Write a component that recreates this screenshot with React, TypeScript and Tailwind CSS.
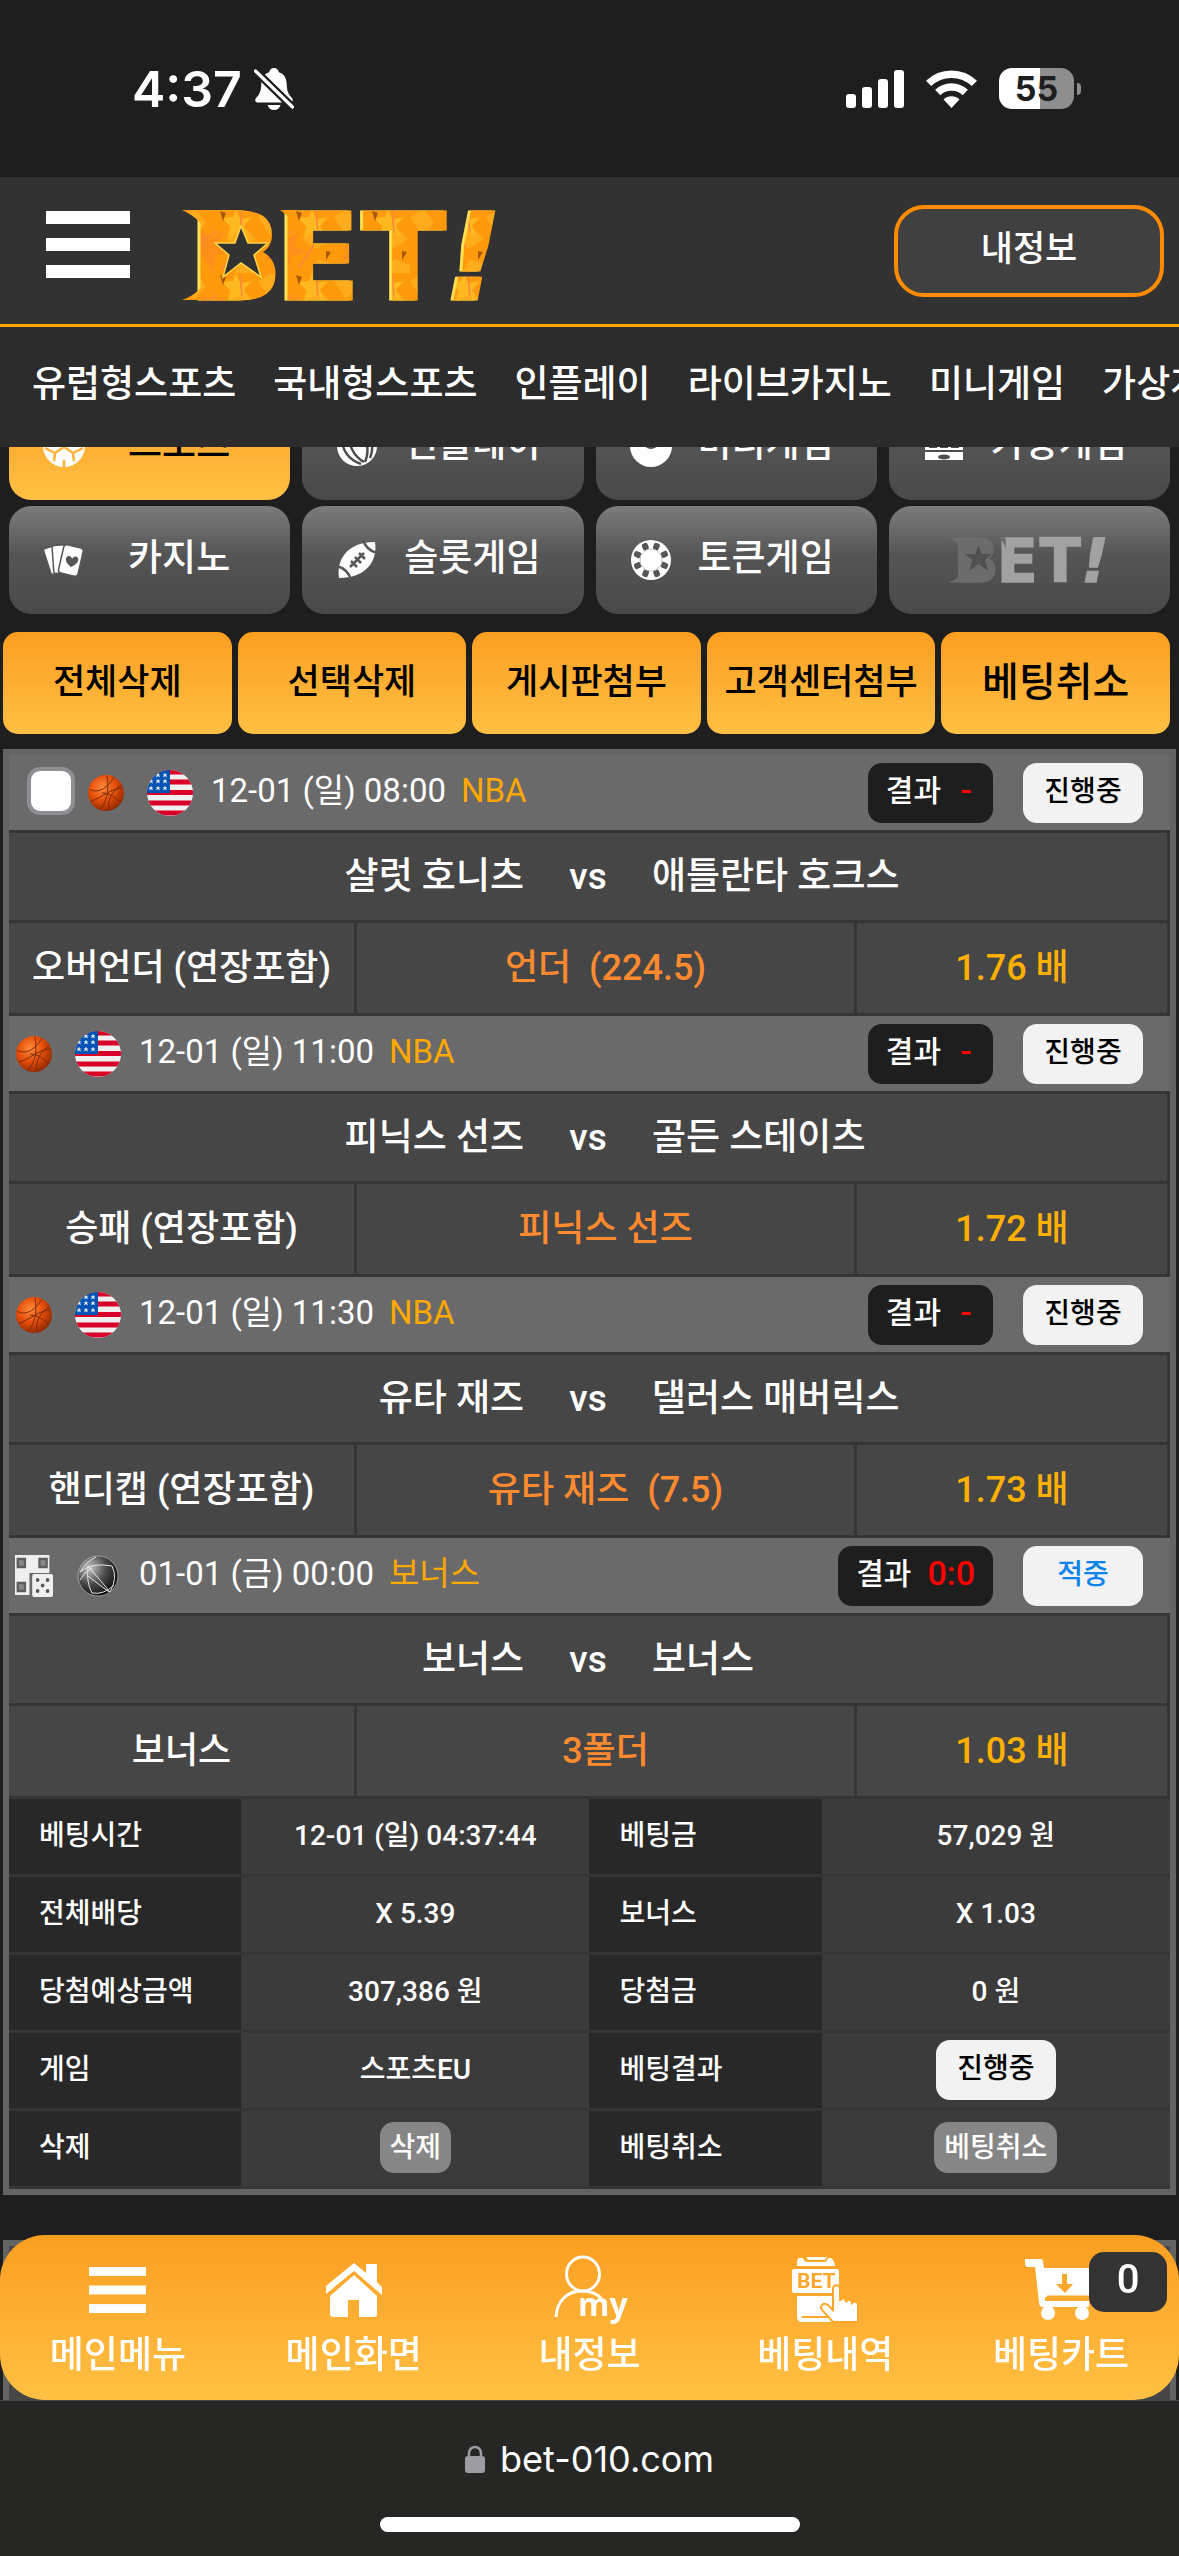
import { useId, type ReactNode } from "react";

interface Match {
  sport: "basketball" | "dice";
  region: "us" | "globe";
  date: string;
  league: string;
  result: string;
  status: string;
  hit?: boolean;
  home: string;
  away: string;
  market: string;
  pick: string;
  odds: string;
  selectable?: boolean;
}

const matches: Match[] = [
  {
    sport: "basketball",
    region: "us",
    date: "12-01 (일) 08:00",
    league: "NBA",
    result: "-",
    status: "진행중",
    home: "샬럿 호니츠",
    away: "애틀란타 호크스",
    market: "오버언더 (연장포함)",
    pick: "언더  (224.5)",
    odds: "1.76 배",
    selectable: true,
  },
  {
    sport: "basketball",
    region: "us",
    date: "12-01 (일) 11:00",
    league: "NBA",
    result: "-",
    status: "진행중",
    home: "피닉스 선즈",
    away: "골든 스테이츠",
    market: "승패 (연장포함)",
    pick: "피닉스 선즈",
    odds: "1.72 배",
  },
  {
    sport: "basketball",
    region: "us",
    date: "12-01 (일) 11:30",
    league: "NBA",
    result: "-",
    status: "진행중",
    home: "유타 재즈",
    away: "댈러스 매버릭스",
    market: "핸디캡 (연장포함)",
    pick: "유타 재즈  (7.5)",
    odds: "1.73 배",
  },
  {
    sport: "dice",
    region: "globe",
    date: "01-01 (금) 00:00",
    league: "보너스",
    result: "0:0",
    status: "적중",
    hit: true,
    home: "보너스",
    away: "보너스",
    market: "보너스",
    pick: "3폴더",
    odds: "1.03 배",
  },
];

const navLinks = ["유럽형스포츠", "국내형스포츠", "인플레이", "라이브카지노", "미니게임", "가상게임"];
const actions = ["전체삭제", "선택삭제", "게시판첨부", "고객센터첨부", "베팅취소"];

/* ---------- Icons ---------- */

function BellOffIcon() {
  return (
    <svg viewBox="0 0 40 42" className="h-[42px] w-10" fill="#fff">
      <path d="M20 0c-2.600 0-4.500 1.800-4.800 4.200C9.500 6 7.500 10.500 7.300 16c-.2 7-1.600 10-4.800 13.500C.5 31.700.8 34.500 4 34.500h32c3.200 0 3.500-2.800 1.500-5C34.300 26 32.900 23 32.700 16c-.2-5.500-2.200-10-7.900-11.800C24.500 1.800 22.600 0 20 0z" />
      <path d="M13.500 37h13c-.8 3-3.300 5-6.500 5s-5.700-2-6.500-5z" />
      <path d="M1 2.500l38 37" stroke="#1e1e1e" strokeWidth="8" />
      <path d="M1.500 3l37 36" stroke="#fff" strokeWidth="3.200" strokeLinecap="round" />
    </svg>
  );
}

function SignalIcon() {
  return (
    <svg viewBox="0 0 58 38" className="h-[38px] w-[58px]" fill="#fff">
      <rect x="0" y="24" width="10" height="14" rx="3" />
      <rect x="16" y="17" width="10" height="21" rx="3" />
      <rect x="32" y="9" width="10" height="29" rx="3" />
      <rect x="48" y="0" width="10" height="38" rx="3" />
    </svg>
  );
}

function WifiIcon() {
  return (
    <svg viewBox="0 0 51 38" className="h-[38px] w-[51px]">
      <g fill="none" stroke="#fff" strokeWidth="7.500">
        <path d="M2.600 13.400a33 33 0 0 1 45.800 0" />
        <path d="M11.700 22.500a20 20 0 0 1 27.600 0" />
      </g>
      <path d="M25.500 38l-8-8.400a11.500 11.500 0 0 1 16 0z" fill="#fff" />
    </svg>
  );
}

function BurgerIcon({ className }: { className: string }) {
  return (
    <svg viewBox="0 0 84 67" preserveAspectRatio="none" className={className} fill="#fff">
      <rect width="84" height="13" />
      <rect y="27" width="84" height="13" />
      <rect y="54" width="84" height="13" />
    </svg>
  );
}

function Logo({ muted, className }: { muted?: boolean; className: string }) {
  const id = useId();
  const main = muted ? "#a2a2a2" : `url(#${id})`;
  const dim = muted ? "#6c6c6c" : main;
  const hole = muted ? "#505050" : "#323232";
  const letters = (fill: string, soft: string, dx: number) => (
    <g transform={`translate(${dx} 0)`}>
      <text x="9" y="90" fill={soft} stroke={soft}>B</text>
      <text x="96" y="90" fill={fill} stroke={fill}>E</text>
      <text x="182" y="90" fill={fill} stroke={fill}>T</text>
      <text x="265" y="90" fill={fill} stroke={fill} fontStyle="italic">!</text>
    </g>
  );
  return (
    <svg viewBox="0 0 323 92" className={`overflow-visible ${className}`} role="img" aria-label="BET!">
      <defs>
        <pattern id={id} width="76" height="64" patternUnits="userSpaceOnUse">
          <rect width="76" height="64" fill="#ff9a0c" />
          <path d="M0 8l14-8 10 14-12 12zM44 30l18-12 12 12-16 10zM52 64l8-14 16 6v8z" fill="#ffac1c" />
          <path d="M20 20l8 10 14-8-6 14 14 8-16 2-4 16-8-14-16 4 10-12z" fill="#ff8f1a" />
          <path d="M54 0l4 10 12-2-8 9 6 12-12-6-10 6 2-12-8-8 11-1z" fill="#ffb81e" />
          <path d="M38 2l6 2-3 8zM68 42l5 1-5 8z" fill="#a85800" />
          <path d="M10 40l24-18M58 2l2 22M40 60l16-24" stroke="#ff8440" strokeWidth="1.500" />
        </pattern>
      </defs>
      <g fontFamily="DejaVu Sans, sans-serif" fontWeight="700" fontSize="120" strokeWidth="3">
        {!muted && letters("#ffe052", "#ffe052", -3)}
        {letters(main, dim, 0)}
      </g>
      {/* emblem plate behind the star, plus the swashes on its left edge */}
      <path d="M34 14h34q14 12 6 30q14 16 0 34H34z" fill={dim} />
      <path d="M0 1h26v26Q20 10 0 1zM0 91h26V66Q20 84 0 91zM98 1h16v22Q110 8 98 1z" fill={dim} />
      <path
        d="M59 17l7 17h20L72 46l7 22-20-14-18 14 6-22-14-12h20z"
        fill={hole}
        stroke={muted ? "none" : "#ffd648"}
        strokeWidth="1.500"
      />
    </svg>
  );
}

function SoccerIcon() {
  return (
    <svg viewBox="0 0 44 44" className="size-11">
      <circle cx="22" cy="22" r="21" fill="#fff" />
      <g fill="none" stroke="#ffb133" strokeWidth="2.500">
        <path d="M22 13v10M22 23l-9 6M22 23l9 6M13 29l-1 8M13 29l-10-5M31 29l1 8M31 29l10-5M22 13l-9-7M22 13l9-7M22 36v7" />
      </g>
    </svg>
  );
}

function VolleyballIcon() {
  return (
    <svg viewBox="0 0 44 44" className="size-11">
      <circle cx="22" cy="22" r="20" fill="#fff" />
      <g fill="none" stroke="#4d4d4d" strokeWidth="2.500">
        <path d="M6 12c1 14 8 24 20 28M14 8c-1 12 4 24 15 30M22 4c10 10 13 22 8 34M30 4c8 10 9 20 5 30" />
      </g>
    </svg>
  );
}

function DiscIcon() {
  return (
    <svg viewBox="0 0 44 44" className="size-11">
      <circle cx="22" cy="22" r="21" fill="#fff" />
      <circle cx="22" cy="16" r="9" fill="#4d4d4d" />
      <circle cx="22" cy="16" r="3" fill="#fff" />
    </svg>
  );
}

function SlotIcon() {
  return (
    <svg viewBox="0 0 44 44" className="size-11" fill="#fff">
      <path d="M3 4h38v32H3z" />
      <path d="M7 10h8v14H7zM18 10h8v14h-8zM29 10h8v14h-8z" fill="#4d4d4d" />
      <path d="M9 13h4l-2 9zM20 13h4l-2 9zM31 13h4l-2 9z" />
      <path d="M3 27h38" stroke="#4d4d4d" strokeWidth="2" />
      <ellipse cx="22" cy="33" rx="6" ry="2.500" fill="#4d4d4d" />
    </svg>
  );
}

function CardsIcon() {
  return (
    <svg viewBox="0 0 44 44" className="size-11">
      <g fill="#fff" stroke="#565656" strokeWidth="1.500">
        <rect x="5" y="8" width="17" height="27" rx="2" transform="rotate(-18 13 22)" />
        <rect x="11" y="7" width="18" height="28" rx="2" transform="rotate(-4 20 22)" />
        <rect x="19" y="8" width="20" height="29" rx="3" transform="rotate(13 29 22)" />
      </g>
      <path d="M29 29c-7-5-6-11-2-11 2 0 3 2 3 3 1-2 3-3 5-2 3 2 1 7-6 10z" fill="#565656" />
    </svg>
  );
}

function FootballIcon() {
  return (
    <svg viewBox="0 0 44 44" className="size-11">
      <path d="M4 40C1 22 12 4 40 4c3 20-10 36-36 36z" fill="#fff" />
      <g stroke="#565656" strokeWidth="2.500" fill="none">
        <path d="M28 2c2 6 6 11 14 13M2 28c7 2 12 6 14 14M15 29l14-14M16 23l6 6M20 19l6 6M24 15l6 6" />
      </g>
    </svg>
  );
}

function ChipIcon() {
  return (
    <svg viewBox="0 0 44 44" className="size-11">
      <circle cx="22" cy="22" r="20" fill="#fff" />
      {[22, 67, 112, 157, 202, 247, 292, 337].map((deg) => (
        <rect key={deg} x="19" y="4" width="6" height="7" rx="2" fill="#565656" transform={`rotate(${deg} 22 22)`} />
      ))}
      <circle cx="22" cy="22" r="11" fill="none" stroke="#c4c4c4" strokeWidth="1" />
    </svg>
  );
}

function BasketballIcon() {
  return (
    <svg viewBox="0 0 38 38" className="size-[38px]">
      <defs>
        <radialGradient id="ball" cx=".4" cy=".35" r=".7">
          <stop offset="0" stopColor="#ff8a3c" />
          <stop offset=".5" stopColor="#e64f0a" />
          <stop offset="1" stopColor="#8c2600" />
        </radialGradient>
      </defs>
      <circle cx="19" cy="19" r="18" fill="url(#ball)" />
      <g fill="none" stroke="#7c2c0a" strokeWidth="1">
        <path d="M2 15c8 5 18 0 25-12M12 36c9-8 10-22 8-34M4 27c9-2 22-14 32-13M22 36c-2-10 3-19 12-25M15 19c8 0 14 5 19 10" />
      </g>
    </svg>
  );
}

function UsFlagIcon() {
  return (
    <svg viewBox="0 0 46 46" className="size-[46px]">
      <clipPath id="flag">
        <circle cx="23" cy="23" r="23" />
      </clipPath>
      <g clipPath="url(#flag)">
        <rect width="46" height="46" fill="#f0f0f0" />
        <path d="M0 3h46M0 13h46M0 23.500h46M0 34h46M0 44h46" transform="translate(0 -1)" stroke="#d80027" strokeWidth="5.200" />
        <rect width="23" height="23" fill="#0052b4" />
        <g fill="#f0f0f0">
          {[5, 11, 18].map((y) =>
            [4, 11, 18].map((x) => (
              <path key={`${x}-${y}`} d={`M${x} ${y - 2.6}l2 5-4.500-3h5l-4.500 3z`} />
            )),
          )}
        </g>
      </g>
    </svg>
  );
}

function DiceIcon() {
  return (
    <svg viewBox="0 0 42 42" className="h-[42px] w-[38px]" preserveAspectRatio="none">
      <g fill="#efefef">
        <path d="M0 0h38v18H0zM0 12h16v28H0z" />
        <rect x="19" y="19" width="23" height="23" rx="2" />
      </g>
      <g fill="#8a8a8a" stroke="#5e5e5e" strokeWidth="2.500">
        <rect x="3" y="4" width="8" height="8" />
        <rect x="27" y="4" width="8" height="8" />
        <rect x="3" y="28" width="8" height="8" />
      </g>
      <g fill="#555">
        <circle cx="25" cy="25" r="2" />
        <circle cx="36" cy="25" r="2" />
        <circle cx="30.500" cy="30.500" r="2" />
        <circle cx="25" cy="36" r="2" />
        <circle cx="36" cy="36" r="2" />
      </g>
    </svg>
  );
}

function GlobeIcon() {
  return (
    <svg viewBox="0 0 44 44" className="size-11">
      <defs>
        <radialGradient id="globe" cx=".3" cy=".3" r=".8">
          <stop offset="0" stopColor="#c4c4c4" />
          <stop offset=".5" stopColor="#4a4a4a" />
          <stop offset="1" stopColor="#050505" />
        </radialGradient>
      </defs>
      <circle cx="22" cy="22" r="20" fill="url(#globe)" />
      <g fill="none" stroke="#e4e4e4" strokeWidth="1">
        <path d="M4 18Q10 8 20 3M4 18Q16 8 36 12M12 12q-2 16 4 27M12 22l21 16M4 26q4-8 12-12M36 12q6 12-2 26M16 39q12 2 22-8M12 12l22 26" />
        <circle cx="22" cy="22" r="20" strokeWidth=".8" stroke="#aaa" />
      </g>
    </svg>
  );
}

function HomeIcon() {
  return (
    <svg viewBox="0 0 56 54" className="h-[54px] w-14" fill="#fff">
      <path d="M28 0L0 23v8L28 8l28 24v-8l-5-5V1H40v9z" />
      <path d="M28 12L4 33v18c0 2 1 3 3 3h15V37h11v17h15c2 0 3-1 3-3V33z" />
    </svg>
  );
}

function MyIcon() {
  return (
    <svg viewBox="0 0 70 70" className="size-[70px] overflow-visible">
      <g fill="none" stroke="#fff" strokeWidth="3">
        <ellipse cx="29" cy="19" rx="16.500" ry="17" />
        <path d="M2 62c1-16 11-26 26-26 8 0 14 2 19 7" />
      </g>
      <text x="24" y="61" fill="#fff" fontFamily="Open Sans, sans-serif" fontSize="32" fontWeight="700">
        my
      </text>
    </svg>
  );
}

function BetSlipIcon() {
  return (
    <svg viewBox="0 0 66 66" className="size-[66px] overflow-visible">
      <g fill="#fff">
        <path d="M7 1h4c1 3 3 4 6 4h14c3 0 4-1 5-4h2c3 0 5 5 5 8H5c0-3 0-8 2-8z" />
        <path d="M14 0h21l-2 3H16z" />
        <rect x="0" y="12" width="47" height="24" rx="2" />
        <path d="M5 39h38v26H10c-3 0-5-2-5-5z" />
      </g>
      <path d="M10 60h29" stroke="#fda82b" strokeWidth="2" />
      <text x="5" y="31" fill="#fda82b" fontFamily="Roboto, sans-serif" fontSize="21" fontWeight="700">
        BET
      </text>
      <path
        d="M41 53V32c0-5 7-5 7 0v12c1-4 6-3 6 1 2-4 6-2 6 1 3-3 6-1 6 2v17H41L30 53c-3-5 2-8 6-5z"
        fill="#fff"
        stroke="#fda82b"
        strokeWidth="2"
      />
    </svg>
  );
}

function CartIcon() {
  return (
    <svg viewBox="0 0 72 62" className="h-[62px] w-[72px]">
      <g fill="#fff">
        <path d="M0 0h16c2 0 2 2 3 9h53l-5 29H20v4h44v6H18c-3 0-4-2-4-5L10 8H3C0 8 0 6 0 0z" />
        <circle cx="23" cy="54" r="7" />
        <circle cx="57" cy="54" r="7" />
      </g>
      <path d="M22 38h46" stroke="#fda82b" strokeWidth="3" />
      <path d="M37 15h5v10h6l-8 9-9-9h6z" fill="#fda82b" />
    </svg>
  );
}

function LockIcon() {
  return (
    <svg viewBox="0 0 20 28" className="h-7 w-5">
      <rect y="11" width="20" height="17" rx="3" fill="#9d9ca3" />
      <path d="M4 13V8a6 6 0 0 1 12 0v5" fill="none" stroke="#9d9ca3" strokeWidth="2.500" />
    </svg>
  );
}

/* ---------- Sections ---------- */

function StatusBar() {
  return (
    <div className="flex h-[177px] items-center justify-between bg-[#1e1e1e] pl-[132px] pr-[98px]">
      <div className="flex items-center gap-3">
        <span className="font-[Inter] text-[50px] font-semibold leading-none">4:37</span>
        <BellOffIcon />
      </div>
      <div className="flex items-center gap-[22px]">
        <SignalIcon />
        <WifiIcon />
        <div className="flex items-center gap-[3px]">
          <div className="flex h-[41px] w-[75px] items-center justify-center rounded-[13px] bg-[linear-gradient(90deg,#fff_55%,#8e8e8e_55%)] font-[Inter] text-[34px] font-bold leading-none text-[#1e1e1e]">
            55
          </div>
          <div className="h-3 w-1 rounded-r-full bg-[#8e8e8e]" />
        </div>
      </div>
    </div>
  );
}

function Header() {
  return (
    <header className="sticky top-0 z-20">
      <StatusBar />
      <div className="flex h-[150px] items-center justify-between border-b-3 border-[#ffa800] bg-[#323232] pl-[46px] pr-[15px]">
        <div className="flex items-center gap-[52px]">
          <button type="button" aria-label="메뉴" className="pb-3">
            <BurgerIcon className="h-[67px] w-[84px]" />
          </button>
          <a href="#home" className="pt-2">
            <Logo className="h-[92px] w-[323px]" />
          </a>
        </div>
        <button
          type="button"
          className="h-[92px] w-[270px] rounded-[30px] border-4 border-[#ff8c00] bg-[#404040] text-[35px] font-medium"
        >
          내정보
        </button>
      </div>
      <nav className="flex h-[120px] items-center gap-[37px] overflow-hidden bg-[#2c2c2c] pb-1 pl-8 text-[37px] font-medium">
        {navLinks.map((label) => (
          <a key={label} href="#menu" className="shrink-0 whitespace-nowrap">
            {label}
          </a>
        ))}
      </nav>
    </header>
  );
}

function CategoryButton({ icon, label, active }: { icon: ReactNode; label: string; active?: boolean }) {
  return (
    <button
      type="button"
      className={`flex h-[108px] items-center rounded-[22px] pl-[33px] pr-[26px] text-[37px] font-medium ${
        active
          ? "bg-linear-to-b from-[#fb9e1f] to-[#ffc043] text-black"
          : "bg-linear-to-b from-[#7c7c7c] via-[#555555] via-45% to-[#494949]"
      }`}
    >
      {icon}
      <span className="flex-1 pb-[2px] pl-2">{label}</span>
    </button>
  );
}

function Categories() {
  return (
    <section className="-mt-[55px] grid grid-cols-4 gap-x-3 gap-y-[6px] px-[9px]">
      <CategoryButton icon={<SoccerIcon />} label="스포츠" active />
      <CategoryButton icon={<VolleyballIcon />} label="인플레이" />
      <CategoryButton icon={<DiscIcon />} label="미니게임" />
      <CategoryButton icon={<SlotIcon />} label="가상게임" />
      <CategoryButton icon={<CardsIcon />} label="카지노" />
      <CategoryButton icon={<FootballIcon />} label="슬롯게임" />
      <CategoryButton icon={<ChipIcon />} label="토큰게임" />
      <button
        type="button"
        className="flex h-[108px] items-center justify-center rounded-[22px] bg-linear-to-b from-[#7c7c7c] via-[#555555] via-45% to-[#494949]"
      >
        <Logo muted className="h-[46px] w-[163px]" />
      </button>
    </section>
  );
}

function Actions() {
  return (
    <section className="mt-[18px] grid grid-cols-5 gap-[6px] pl-[3px] pr-[9px]">
      {actions.map((label, i) => (
        <button
          key={label}
          type="button"
          className={`h-[102px] whitespace-nowrap rounded-[15px] bg-linear-to-b from-[#fb9e1f] to-[#ffc043] font-medium text-black ${
            i === actions.length - 1 ? "text-[40px]" : "text-[35px]"
          }`}
        >
          {label}
        </button>
      ))}
    </section>
  );
}

function StatusPill({ hit, children }: { hit?: boolean; children: ReactNode }) {
  return (
    <span
      className={`inline-flex h-[60px] w-[120px] items-center justify-center rounded-[14px] bg-[#f2f2f2] pb-[2px] text-[28px] font-medium ${
        hit ? "text-[#0a84ea]" : "text-black"
      }`}
    >
      {children}
    </span>
  );
}

function MatchBlock({ match }: { match: Match }) {
  return (
    <article>
      <div className="flex h-[75px] items-center bg-[#6a6a6a] pl-[6px] pr-[27px]">
        {match.selectable && (
          <input
            type="checkbox"
            aria-label="선택"
            className="mb-1 ml-3 mr-3 size-12 appearance-none rounded-[13px] border-4 border-[#8e8e93] bg-white checked:bg-[#0a84ea]"
          />
        )}
        {match.sport === "basketball" ? <BasketballIcon /> : <DiceIcon />}
        <span className="ml-[22px] flex w-[46px] justify-center">
          {match.region === "us" ? <UsFlagIcon /> : <GlobeIcon />}
        </span>
        <span className="ml-[18px] whitespace-nowrap pb-1 text-[33px]">{match.date}</span>
        <span className="ml-[15px] pb-1 text-[33px] text-[#ffa800]">{match.league}</span>
        <span className="ml-auto mr-[30px] flex h-[60px] items-center gap-4 rounded-[14px] bg-[#1e1e1e] px-[18px] pb-1 text-[30px] font-medium">
          결과
          <b className="min-w-[18px] text-center text-[34px] font-medium text-[#ff0000]">{match.result}</b>
        </span>
        <StatusPill hit={match.hit}>{match.status}</StatusPill>
      </div>
      <div className="border-y-3 border-r-3 border-[#353535] bg-[#464646] text-[37px] font-medium">
        <div className="grid h-[87px] grid-cols-[1fr_128px_1fr] items-center text-center">
          <span className="text-right">{match.home}</span>
          <span>vs</span>
          <span className="text-left">{match.away}</span>
        </div>
        <div className="grid h-[93px] grid-cols-[348fr_500fr_310fr] border-t-3 border-[#353535] text-center text-[36px] leading-[90px]">
          <span className="whitespace-nowrap border-r-3 border-[#353535]">{match.market}</span>
          <span className="whitespace-pre border-r-3 border-[#353535] text-[#ff8a30]">{match.pick}</span>
          <span className="text-[#ffb000]">{match.odds}</span>
        </div>
      </div>
    </article>
  );
}

function SummaryRow({ cells }: { cells: [string, ReactNode, string, ReactNode] }) {
  return (
    <tr className="h-[78px] *:border-b-3 *:border-[#353535] *:pb-[2px]">
      <th scope="row" className="bg-[#282828] pl-[30px] text-left font-medium">{cells[0]}</th>
      <td className="bg-[#3b3b3b] text-center">{cells[1]}</td>
      <th scope="row" className="bg-[#282828] pl-[30px] text-left font-medium">{cells[2]}</th>
      <td className="bg-[#3b3b3b] text-center">{cells[3]}</td>
    </tr>
  );
}

function SmallButton({ children }: { children: ReactNode }) {
  return (
    <button type="button" className="h-[51px] rounded-[14px] bg-[#868686] px-[10px] font-medium">
      {children}
    </button>
  );
}

function BetCard() {
  return (
    <section className="mx-[3px] mt-[15px] border-6 border-[#636363]">
      {matches.map((match) => (
        <MatchBlock key={match.date} match={match} />
      ))}
      <table className="w-full table-fixed border-separate border-spacing-0 whitespace-nowrap text-[28px] font-medium">
        <colgroup>
          <col className="w-[20%]" />
          <col className="w-[30%]" />
          <col className="w-[20%]" />
          <col className="w-[30%]" />
        </colgroup>
        <tbody>
          <SummaryRow cells={["베팅시간", "12-01 (일) 04:37:44", "베팅금", "57,029 원"]} />
          <SummaryRow cells={["전체배당", "X 5.39", "보너스", "X 1.03"]} />
          <SummaryRow cells={["당첨예상금액", "307,386 원", "당첨금", "0 원"]} />
          <SummaryRow cells={["게임", "스포츠EU", "베팅결과", <StatusPill>진행중</StatusPill>]} />
          <SummaryRow
            cells={["삭제", <SmallButton>삭제</SmallButton>, "베팅취소", <SmallButton>베팅취소</SmallButton>]}
          />
        </tbody>
      </table>
    </section>
  );
}

function TabLink({ icon, label, badge }: { icon: ReactNode; label: string; badge?: string }) {
  return (
    <a href="#tab" className="relative flex flex-col items-center whitespace-nowrap text-[37px] font-medium leading-[48px]">
      <span className="flex h-[97px] items-center pt-[12px]">{icon}</span>
      {label}
      {badge && (
        <span className="absolute right-3 top-[17px] flex h-[60px] w-[78px] items-center justify-center rounded-[15px] bg-[#333333] pb-1 text-[40px]">
          {badge}
        </span>
      )}
    </a>
  );
}

function BottomBar() {
  return (
    <footer className="fixed inset-x-0 bottom-0 z-20">
      <nav className="grid h-[165px] grid-cols-5 rounded-[45px] bg-linear-to-b from-[#fb9e1f] to-[#ffc043]">
        <TabLink icon={<BurgerIcon className="h-[46px] w-[57px]" />} label="메인메뉴" />
        <TabLink icon={<HomeIcon />} label="메인화면" />
        <TabLink icon={<MyIcon />} label="내정보" />
        <TabLink icon={<BetSlipIcon />} label="베팅내역" />
        <TabLink icon={<CartIcon />} label="베팅카트" badge="0" />
      </nav>
      <div className="flex h-[156px] flex-col items-center justify-between border-t border-[#444444] bg-[#262625] pb-6 pt-[34px]">
        <div className="flex items-center gap-[15px]">
          <LockIcon />
          <span className="font-[Inter] text-[36px] leading-[48px]">bet-010.com</span>
        </div>
        <div className="h-[15px] w-[420px] rounded-full bg-white" />
      </div>
    </footer>
  );
}

export default function App() {
  return (
    <div className="min-h-screen bg-[#1e1e1e] font-[Roboto,'Noto_Sans_CJK_KR',sans-serif] text-white">
      <Header />
      <main className="pb-[156px]">
        <Categories />
        <Actions />
        <BetCard />
        <section className="mx-[3px] mt-[45px] h-40 border-x-6 border-t-6 border-[#636363] bg-[#464646]" />
      </main>
      <BottomBar />
    </div>
  );
}
